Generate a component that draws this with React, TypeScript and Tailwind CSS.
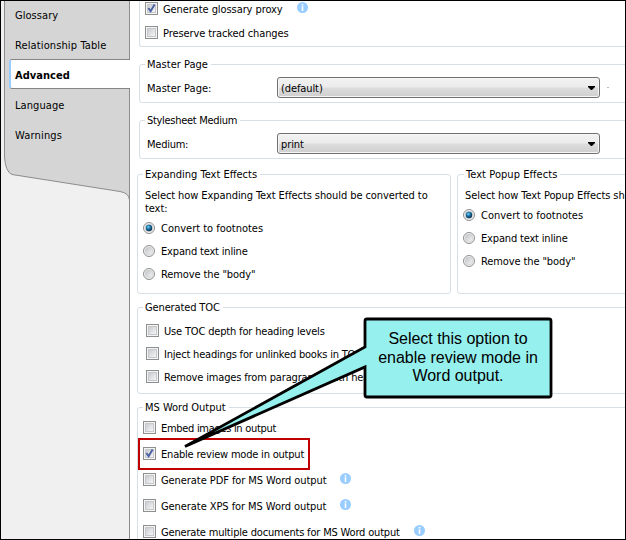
import React from "react";

type Children = { children?: React.ReactNode };

function Check({ on }: { on?: boolean }) {
  return (
    <svg width="13" height="13" viewBox="0 0 13 13" className="shrink-0">
      <defs>
        <linearGradient id="cb" x1="0" y1="0" x2="1" y2="1">
          <stop offset="0" stopColor="#c6c9ce" />
          <stop offset="1" stopColor="#f8f8f8" />
        </linearGradient>
      </defs>
      <rect x=".5" y=".5" width="12" height="12" fill="#f4f4f4" stroke="#8e8f8f" />
      <rect x="2.5" y="2.5" width="8" height="8" fill="url(#cb)" stroke="#c6c8cc" />
      {on && <path d="M3.4 6 5.6 9.2 9.6 2.6" fill="none" stroke="#4a61a3" strokeWidth="1.9" />}
    </svg>
  );
}

function Radio({ on }: { on?: boolean }) {
  return (
    <svg width="12" height="12" viewBox="0 0 12 12" className="shrink-0">
      <defs>
        <linearGradient id="rd" x1="0" y1="0" x2="1" y2="1">
          <stop offset="0" stopColor="#bfc2c6" />
          <stop offset="1" stopColor="#f6f6f6" />
        </linearGradient>
        <radialGradient id="dot" cx=".4" cy=".35" r=".65">
          <stop offset="0" stopColor="#7fd3f2" />
          <stop offset=".45" stopColor="#1e78ac" />
          <stop offset="1" stopColor="#0b2f4f" />
        </radialGradient>
      </defs>
      <circle cx="6" cy="6" r="5.5" fill="#f3f3f3" stroke="#8e8f8f" />
      <circle cx="6" cy="6" r="3.9" fill="url(#rd)" stroke="#c9cbce" strokeWidth=".6" />
      {on && <circle cx="6" cy="6" r="3.2" fill="url(#dot)" />}
    </svg>
  );
}

function Info() {
  return (
    <svg width="11" height="11" viewBox="0 0 11 11" className="-mt-[2px] ml-[14px] shrink-0">
      <circle cx="5.5" cy="5.5" r="5.5" fill="#99ccff" />
      <path d="M4.7 2h1.6v1.4H4.7zM4.7 4.3h1.6V9H4.7z" fill="#fff" />
    </svg>
  );
}

function Group({ title, titleClass = "", className, children }: Children & { title: string; titleClass?: string; className: string }) {
  return (
    <fieldset className={`relative min-w-0 rounded-[3px] border border-[#d5dfe5] ${className}`}>
      <div className={`absolute -top-[7px] left-[5px] bg-white pr-[3px] pl-[2px] ${titleClass}`}>{title}</div>
      {children}
    </fieldset>
  );
}

function Option({ on, info, className = "", text = "", children }: Children & { on?: boolean; info?: boolean; className?: string; text?: string }) {
  return (
    <div className={`flex h-[13px] items-center ${className}`}>
      <Check on={on} />
      <span className={`-mb-[2px] ml-[5px] ${text}`}>{children}</span>
      {info && <Info />}
    </div>
  );
}

function Choice({ on, text, children }: Children & { on?: boolean; text: string }) {
  return (
    <div className="flex h-[23px] items-center">
      <Radio on={on} />
      <span className={`-mb-[2px] ml-[6px] ${text}`}>{children}</span>
    </div>
  );
}

function Choices() {
  return (
    <div className="mt-px">
      <Choice on text="tracking-[-0.01px]">Convert to footnotes</Choice>
      <Choice text="tracking-[-0.17px]">Expand text inline</Choice>
      <Choice text="tracking-[-0.11px]">Remove the "body"</Choice>
    </div>
  );
}

function Select({ label, value, text }: { label: string; value: string; text: string }) {
  return (
    <div className="flex items-center pt-[12px] pl-[7px]">
      <span className={`-mb-[2px] w-[130px] ${text}`}>{label}</span>
      <div className="flex h-[21px] w-[323px] items-center justify-between rounded-[3px] border border-[#707070] bg-[linear-gradient(#f2f2f2,#ebebeb_49%,#dddddd_51%,#cfcfcf)] pr-[4px] pl-[3px] shadow-[inset_0_0_0_1px_#f6f6f6]">
        <span className="-mb-[2px] tracking-[-0.1px]">{value}</span>
        <svg width="7" height="4" viewBox="0 0 7 4"><path d="M0 0h7v1L4 4H3L0 1z" /></svg>
      </div>
    </div>
  );
}

function Sidebar() {
  return (
    <nav className="relative w-[129px] shrink-0 border-r border-[#8c8c8c] bg-[#f0f0f0]">
      <svg className="absolute top-0 left-0" width="129" height="205" viewBox="0 0 129 205">
        <path d="M3.5-1V156Q4.500 171 11 173.500L119 190.500Q128 192 128.500 199V-1Z" fill="#d5d5d5" stroke="#8c8c8c" />
      </svg>
      <div className="relative -mr-px flex flex-col">
        <div className="flex h-[28px] items-center pt-px pl-[14px] tracking-[0.05px]">Glossary</div>
        <div className="flex h-[30px] items-center pt-[2px] pl-[14px] tracking-[0.12px]">Relationship Table</div>
        <div className="ml-[8px] flex h-[30px] items-center rounded-l-[3px] border-y border-l-2 border-y-[#858585] border-l-[#99ccff] bg-white pt-[2px] pl-[4px] font-bold tracking-[0.03px]">Advanced</div>
        <div className="flex h-[30px] items-center pt-[2px] pl-[14px] tracking-[0.08px]">Language</div>
        <div className="flex h-[30px] items-center pt-[2px] pl-[14px] tracking-[0.17px]">Warnings</div>
      </div>
    </nav>
  );
}

export default function App() {
  return (
    <div className="relative h-[540px] w-[626px] overflow-hidden border border-black bg-white font-['DejaVu_Sans_Condensed','DejaVu_Sans',sans-serif] text-[11px] leading-[13px] tracking-[-0.3px] whitespace-nowrap text-black">
      <div className="flex h-[538px]">
        <Sidebar />
        <main className="-mr-[8px] min-w-0 flex-1 pl-[9px]">
          <fieldset className="h-[46px] rounded-bl-[3px] border-b border-l border-[#d5dfe5] pt-px pl-[5px]">
            <Option on info text="tracking-[-0.08px]">Generate glossary proxy</Option>
            <Option className="mt-[11px]" text="tracking-[-0.1px]">Preserve tracked changes</Option>
          </fieldset>
          <Group title="Master Page" titleClass="tracking-[0px]" className="mt-[17px] h-[39px]"><Select label="Master Page:" value="(default)" text="tracking-[0.02px]" /></Group>
          <Group title="Stylesheet Medium" className="mt-[17px] h-[39px]"><Select label="Medium:" value="print" text="tracking-[-0.25px]" /></Group>
          <div className="mt-[15px] -ml-[2px] flex gap-[6px]">
            <Group title="Expanding Text Effects" titleClass="tracking-[0px]" className="h-[120px] w-[314px] shrink-0 pl-[5px]">
              <p className="pt-[14px] pl-[2px] tracking-[-0.08px]">Select how Expanding Text Effects should be converted to<br />text:</p>
              <Choices />
            </Group>
            <Group title="Text Popup Effects" titleClass="ml-px tracking-[0.06px]" className="h-[120px] w-[200px] shrink-0 pl-[5px]">
              <p className="pt-[14px] pl-[2px] tracking-[-0.08px]">Select how Text Popup Effects sh</p>
              <Choices />
            </Group>
          </div>
          <Group title="Generated TOC" titleClass="tracking-[-0.13px]" className="mt-[13px] -ml-[2px] h-[87px] pl-[8px]">
            <Option className="mt-[16px]" text="tracking-[-0.17px]">Use TOC depth for heading levels</Option>
            <Option className="mt-[10px]" text="tracking-[-0.2px]">Inject headings for unlinked books in TOC</Option>
            <Option className="mt-[10px]" text="tracking-[-0.15px]">Remove images from paragraphs with headings</Option>
          </Group>
          <Group title="MS Word Output" titleClass="tracking-[-0.02px]" className="mt-[13px] -ml-[2px] h-[160px] pl-[5px]">
            <Option className="mt-[13px]">Embed images in output</Option>
            <Option on className="mt-[13px]" text="tracking-[-0.2px]">Enable review mode in output</Option>
            <Option info className="mt-[13px]" text="tracking-[-0.07px]">Generate PDF for MS Word output</Option>
            <Option info className="mt-[13px]" text="tracking-[-0.07px]">Generate XPS for MS Word output</Option>
            <Option info className="mt-[13px]" text="tracking-[-0.18px]">Generate multiple documents for MS Word output</Option>
          </Group>
        </main>
      </div>
      <div className="absolute top-[86px] left-[606px] h-px w-[2px] bg-[#b8b8b8]" />
      <div className="absolute top-[437px] left-[137px] h-[32px] w-[172px] border-2 border-[#c00000]" />
      <svg className="absolute -top-px -left-px" width="626" height="540" viewBox="0 0 626 540">
        <path d="M367 319H549Q551 319 551 321V395Q551 397 549 397H367Q365 397 365 395V367L185 446.500L365 347V321Q365 319 367 319Z" fill="#96f0ee" stroke="#000" strokeWidth="2.8" />
      </svg>
      <div className="absolute top-[329px] left-[365px] w-[184px] text-center font-['Liberation_Sans',Arial,sans-serif] text-[16px] leading-[18.500px] tracking-[-0.02px]">Select this option to<br />enable review mode in<br />Word output.</div>
    </div>
  );
}
